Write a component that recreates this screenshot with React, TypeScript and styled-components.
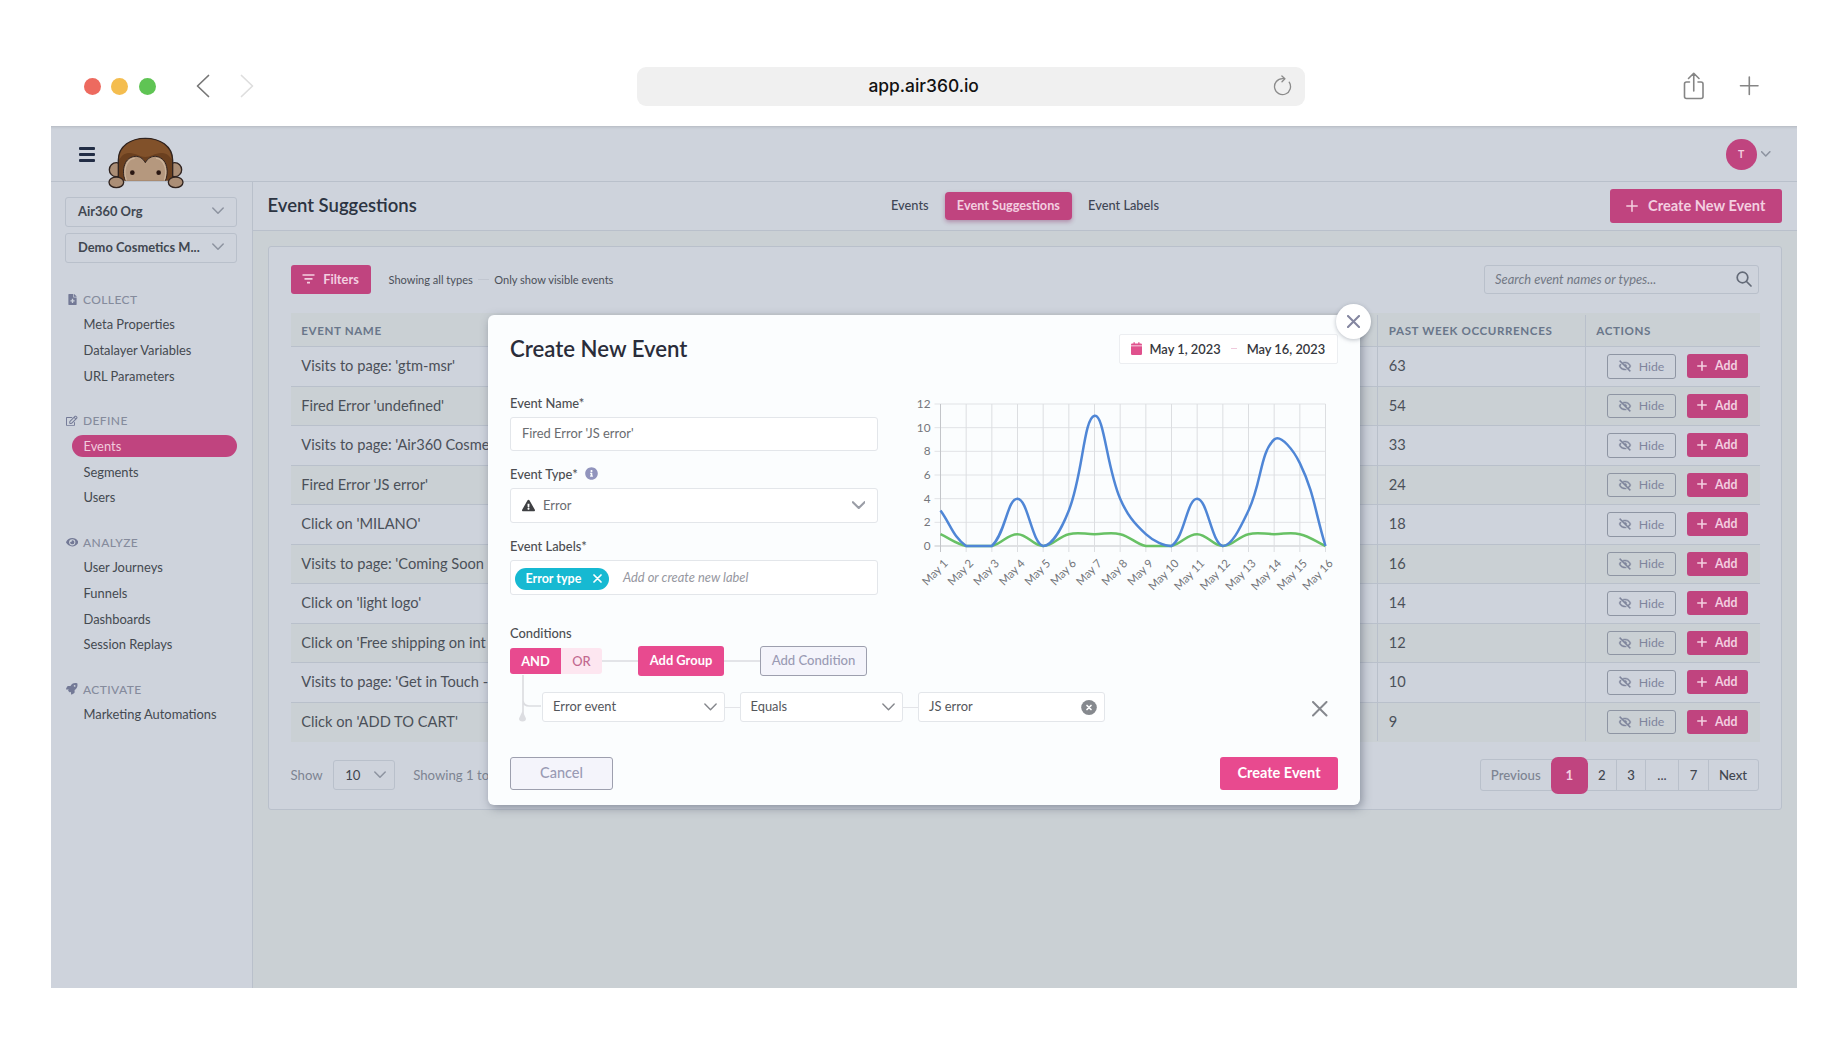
import React from 'react';
import styled, { createGlobalStyle, css } from 'styled-components';
import { FaEye, FaRocket, FaRegEdit, FaFileMedical, FaExclamationTriangle, FaInfoCircle } from 'react-icons/fa';
import { BiHide } from 'react-icons/bi';

const c = {
  panel: '#ced3dc',
  canvas: '#cad0d4',
  line: '#b9c0cb',
  pink: '#c0447f',
  pinkText: '#f3cfe0',
  text: '#4b5059',
  heading: '#2c3442',
  muted: '#858b9c',
  bright: '#e84a8f',
  modal: '#fbfdfe',
  fieldLine: '#e3e6ea',
  lavender: '#9a9bb4',
};

const GlobalStyle = createGlobalStyle`
  * { box-sizing: border-box; }
  body { margin: 0; background: #fff; font-family: Lato, "Open Sans", sans-serif; color: ${c.text}; }
  svg { display: block; flex: none; }
  button { font: inherit; margin: 0; cursor: pointer; }
`;

const Page = styled.div`
  position: relative;
  width: 1847px;
  height: 1039px;
  padding: 0 50px 0 51px;
  overflow: hidden;
  background: #fff;
`;

/* Browser chrome */
const Chrome = styled.div`
  display: flex;
  align-items: flex-start;
  height: 126px;
  padding: 46px 38px 0 32.5px;
`;
const ChromeItem = styled.div<{ $left?: number }>`
  display: flex;
  align-items: center;
  height: 80px;
  margin-left: ${(p) => p.$left ?? 0}px;
`;
const Light = styled.span<{ $color: string }>`
  width: 17px;
  height: 17px;
  margin-right: 10.8px;
  border-radius: 50%;
  background: ${(p) => p.$color};
`;
const AddressBar = styled.div`
  display: flex;
  align-items: center;
  justify-content: space-between;
  width: 668px;
  height: 39px;
  padding: 0 13px 1px 231.5px;
  border-radius: 9px;
  background: #f0f0f0;
  color: #111;
  font: 500 17.4px Inter, "Open Sans", sans-serif;
`;

/* Application shell */
const Workspace = styled.div`
  height: 862px;
  background: ${c.panel};
  box-shadow: inset 0 4px 3px -3px rgba(140, 145, 150, 0.4);
`;
const Header = styled.header`
  display: flex;
  align-items: flex-start;
  height: 56px;
  padding: 0 26.5px 0 27.5px;
  border-bottom: 1px solid ${c.line};
`;
const Burger = styled.div`
  display: grid;
  gap: 3.4px;
  width: 16.5px;
  margin: 21.3px 13px 0 0;
  span { height: 2.5px; border-radius: 1px; background: #222d45; }
`;
const Logo = styled.svg`
  margin-top: 11px;
  z-index: 1;
`;
const Account = styled.div`
  display: flex;
  align-items: center;
  gap: 4.5px;
  margin: 13px 0 0 auto;
`;
const Avatar = styled.div`
  display: grid;
  place-items: center;
  width: 30.5px;
  height: 30.5px;
  border-radius: 50%;
  background: ${c.pink};
  color: ${c.pinkText};
  font-size: 10.5px;
  font-weight: 700;
`;
const Shell = styled.div`
  display: grid;
  grid-template-columns: 201.5px 1fr;
  height: 806px;
`;
const Sidebar = styled.nav`
  padding: 15px 15px 0 14px;
  border-right: 1px solid ${c.line};
`;
const Picker = styled.div`
  display: flex;
  align-items: center;
  justify-content: space-between;
  height: 29.5px;
  margin-bottom: 6.8px;
  padding: 0 12px 2px 12px;
  border: 1px solid ${c.line};
  border-radius: 3px;
  color: #414751;
  font-size: 12.9px;
  font-weight: 700;
`;
const Group = styled.section`
  margin-top: 20.4px;
  &:first-of-type { margin-top: 23.6px; }
`;
const GroupLabel = styled.div`
  display: flex;
  align-items: center;
  height: 27.6px;
  padding-bottom: 1.9px;
  color: ${c.muted};
  font-size: 12px;
  font-weight: 500;
  letter-spacing: 0.4px;
`;
const GroupIcon = styled.span`
  display: flex;
  justify-content: center;
  width: 14px;
  margin-right: 4px;
  color: #737996;
`;
const NavLink = styled.a<{ $active?: boolean }>`
  display: flex;
  align-items: center;
  height: 22px;
  margin: 0 0 3.72px 6.5px;
  padding: 0 0 1px 12px;
  border-radius: 11px;
  font-size: 12.9px;
  color: #444950;
  ${(p) => p.$active && css`background: ${c.pink}; color: #f2cbdd;`}
`;

const Main = styled.main`
  background: ${c.canvas};
`;
const TitleBar = styled.div`
  display: flex;
  align-items: center;
  height: 49px;
  padding: 0 15px 0 15px;
  border-bottom: 1px solid ${c.line};
  background: ${c.panel};
`;
const Title = styled.h1`
  flex: 0 0 623.5px;
  margin: 0 0 3px;
  color: ${c.heading};
  font-size: 18.5px;
  font-weight: 600;
`;
const Tab = styled.a<{ $active?: boolean }>`
  display: flex;
  align-items: center;
  justify-content: center;
  height: 28px;
  margin-right: 16px;
  padding-bottom: 2px;
  color: #3f4655;
  font-size: 12.8px;
  font-weight: 500;
  ${(p) => p.$active && css`
    width: 127.5px;
    border-radius: 4px;
    background: ${c.pink};
    color: ${c.pinkText};
    font-size: 12.7px;
    font-weight: 700;
    box-shadow: 0 2px 4px rgba(140, 60, 110, 0.45);
  `}
`;
const Solid = styled.button<{ $w: number; $h: number; $size: number; $gap?: number; $bright?: boolean }>`
  display: flex;
  align-items: center;
  justify-content: center;
  gap: ${(p) => p.$gap ?? 0}px;
  width: ${(p) => p.$w}px;
  height: ${(p) => p.$h}px;
  padding: 0 0 1px;
  border: 0;
  border-radius: 3px;
  background: ${(p) => (p.$bright ? c.bright : c.pink)};
  color: ${(p) => (p.$bright ? '#fff' : c.pinkText)};
  font-size: ${(p) => p.$size}px;
  font-weight: 700;
  white-space: nowrap;
`;
const PushRight = styled.div`
  margin-left: auto;
`;
const Card = styled.section`
  width: 1514px;
  height: 564px;
  margin: 15px 0 0 15px;
  padding: 18px 22px 0 22px;
  border: 1px solid ${c.line};
  border-radius: 3px;
  background: ${c.panel};
`;
const Toolbar = styled.div`
  display: flex;
  align-items: center;
  height: 29px;
  font-size: 11.3px;
`;
const Separator = styled.span`
  width: 11px;
  height: 1px;
  margin: 0 5px 0 5.5px;
  background: #c1c6d0;
`;
const Note = styled.span<{ $left?: number }>`
  margin-left: ${(p) => p.$left ?? 0}px;
  font-size: 11.05px;
`;
const Search = styled.div`
  display: flex;
  align-items: center;
  justify-content: space-between;
  width: 275px;
  height: 29.5px;
  margin-left: auto;
  padding: 0 6px 1px 10.5px;
  border: 1px solid ${c.line};
  border-radius: 3px;
  color: #727884;
  font-size: 12.9px;
  font-style: italic;
`;
const Table = styled.div`
  width: 1469px;
  margin-top: 19px;
`;
const Row = styled.div<{ $shade?: boolean; $head?: boolean }>`
  display: grid;
  grid-template-columns: 1086.5px 207.5px 1fr;
  height: ${(p) => (p.$head ? 34 : 39.5)}px;
  border-bottom: 1px solid ${c.line};
  background: ${(p) => (p.$shade ? c.canvas : 'transparent')};
  font-size: 14.65px;
  ${(p) => p.$head && css`
    padding-top: 2px;
    color: #69768a;
    font-size: 11.6px;
    font-weight: 700;
    letter-spacing: 0.6px;
  `}
  &:last-child { border-bottom-color: transparent; }
`;
const Cell = styled.div<{ $actions?: boolean }>`
  display: flex;
  align-items: center;
  gap: 11px;
  padding: 0 0 ${(p) => (p.$actions ? 0 : 1)}px ${(p) => (p.$actions ? 21 : 10.8)}px;
  white-space: nowrap;
  & + & { border-left: 1px solid ${c.line}; }
`;
const Hide = styled.button`
  display: flex;
  align-items: center;
  justify-content: center;
  gap: 7px;
  width: 69px;
  height: 24.5px;
  padding: 0;
  border: 1px solid #8e95a3;
  border-radius: 3px;
  background: transparent;
  color: #7f859c;
  font-size: 12.3px;
  svg { stroke: currentColor; stroke-width: 0.7px; }
`;
const Footer = styled.div`
  display: flex;
  align-items: center;
  height: 37px;
  margin-top: 14.5px;
  color: #7d8492;
  font-size: 13.2px;
`;
const PageSize = styled.div`
  display: flex;
  align-items: center;
  justify-content: space-between;
  width: 61.5px;
  height: 29.5px;
  margin: 0 18.5px 0 10.5px;
  padding: 0 8px 1px 11px;
  border: 1px solid ${c.line};
  border-radius: 3px;
  color: #41464f;
`;
const Pager = styled.div`
  display: flex;
  align-items: center;
  width: 279px;
  height: 31.5px;
  margin-left: auto;
  border: 1px solid ${c.line};
  border-radius: 3px;
`;
const PageLink = styled.span<{ $w: number; $muted?: boolean; $active?: boolean; $rule?: boolean }>`
  display: flex;
  align-items: center;
  justify-content: center;
  flex: 0 0 ${(p) => p.$w}px;
  height: 29.5px;
  padding-bottom: 1px;
  border-right: ${(p) => (p.$rule ? `1px solid ${c.line}` : '0')};
  color: ${(p) => (p.$muted ? '#7d8492' : '#41464f')};
  font-weight: 500;
  ${(p) => p.$active && css`
    height: 37px;
    border-radius: 7px;
    background: ${c.pink};
    color: ${c.pinkText};
    font-weight: 700;
  `}
`;

/* Dialog */
const Dialog = styled.div`
  position: absolute;
  top: 315px;
  left: 488px;
  z-index: 2;
  width: 872px;
  height: 490px;
  padding: 19px 22px 0;
  border-radius: 6px;
  background: ${c.modal};
  box-shadow: 2px 3px 10px rgba(70, 78, 95, 0.5);
  color: #4c4e52;
  font-size: 12.9px;
`;
const CloseButton = styled.button`
  position: absolute;
  top: -11px;
  right: -11px;
  display: grid;
  place-items: center;
  width: 35px;
  height: 35px;
  padding: 0;
  border: 0;
  border-radius: 50%;
  background: #fff;
  box-shadow: 0 1px 4px rgba(70, 78, 95, 0.35);
`;
const DialogHead = styled.div`
  display: flex;
  align-items: center;
  justify-content: space-between;
  height: 30px;
  margin-bottom: 29.5px;
`;
const DialogTitle = styled.h2`
  margin: 0 0 2px;
  color: #2a2d3a;
  font-size: 22.2px;
  font-weight: 600;
`;
const DateRange = styled.div`
  display: flex;
  align-items: center;
  width: 219px;
  height: 30px;
  padding: 0 0 1px 10.5px;
  border: 1px solid #eceef1;
  border-radius: 2px;
  background: #fff;
  color: #36373d;
  font-size: 12.85px;
  font-weight: 600;
  white-space: nowrap;
  svg { margin-right: 8px; }
`;
const DateDash = styled.span`
  width: 6px;
  height: 1px;
  margin: 0 9.5px 0 10.5px;
  background: #efc9dc;
`;
const DialogBody = styled.div`
  display: flex;
  gap: 32px;
`;
const Fields = styled.div`
  display: grid;
  gap: 14.1px;
  width: 368px;
`;
const Label = styled.div`
  display: flex;
  align-items: center;
  gap: 7px;
  height: 18px;
  margin-bottom: 5px;
  font-weight: 500;
  svg { margin-bottom: 2px; }
`;
const Input = styled.div`
  display: flex;
  align-items: center;
  gap: 8px;
  height: 34.7px;
  padding: 0 12px 1px 11px;
  border: 1px solid ${c.fieldLine};
  border-radius: 3px;
  background: #fff;
  color: #6a6c70;
  i { margin-left: 6px; color: #96979f; }
`;
const Chip = styled.span`
  display: flex;
  align-items: center;
  justify-content: space-between;
  width: 94px;
  height: 22px;
  margin: 4px 0 0 -7px;
  padding: 0 7px 1px 10.5px;
  border-radius: 11px;
  background: #16b9d2;
  color: #fff;
  font-size: 12.5px;
  font-weight: 700;
`;
const ConditionLabel = styled(Label)`
  margin: 29px 0 4.5px;
`;
const Strip = styled.div`
  display: flex;
  align-items: center;
  height: 29px;
`;
const Toggle = styled.span<{ $w: number; $on?: boolean }>`
  display: grid;
  place-items: center;
  width: ${(p) => p.$w}px;
  height: 26px;
  border-radius: ${(p) => (p.$on ? '3px 0 0 3px' : '0 3px 3px 0')};
  background: ${(p) => (p.$on ? c.bright : '#fde6f0')};
  color: ${(p) => (p.$on ? '#fff' : '#c2698f')};
  font-size: 12.9px;
  font-weight: ${(p) => (p.$on ? 700 : 500)};
`;
const Connector = styled.span<{ $w: number; $thin?: boolean }>`
  width: ${(p) => p.$w}px;
  height: ${(p) => (p.$thin ? 1 : 2)}px;
  background: #e3e4e8;
`;
const Outline = styled.button<{ $w: number; $h: number; $size: number }>`
  width: ${(p) => p.$w}px;
  height: ${(p) => p.$h}px;
  padding: 0 0 2px;
  border: 1px solid #9d9fae;
  border-radius: 3px;
  background: #f4f4fb;
  color: ${c.lavender};
  font-size: ${(p) => p.$size}px;
  font-weight: 500;
`;
const Condition = styled.div`
  display: flex;
  align-items: flex-end;
  height: 46.5px;
`;
const ConditionRow = styled.div`
  display: flex;
  align-items: center;
  flex: 1;
  height: 29.5px;
`;
const Select = styled.div<{ $w: number }>`
  display: flex;
  align-items: center;
  justify-content: space-between;
  width: ${(p) => p.$w}px;
  height: 29.5px;
  padding: 0 7px 2px 10px;
  border: 1px solid ${c.fieldLine};
  border-radius: 3px;
  background: #fff;
  color: #54565b;
  svg { margin-top: 3px; }
`;
const RemoveButton = styled.span`
  margin: 4px 10.5px 0 auto;
`;
const DialogFooter = styled.div`
  display: flex;
  justify-content: space-between;
  margin-top: 35px;
`;

const Chevron = ({ w = 12, color = '#8d93a0', sw = 1.5 }) => (
  <svg width={w} height={w * 0.62} viewBox="0 0 12 7.4" fill="none" stroke={color} strokeWidth={sw} strokeLinecap="round" strokeLinejoin="round">
    <path d="M.8 1 6 6.3 11.2 1" />
  </svg>
);
const Cross = ({ s, color, sw }: { s: number; color: string; sw: number }) => (
  <svg width={s} height={s} viewBox={`0 0 ${s} ${s}`} stroke={color} strokeWidth={sw} strokeLinecap="round">
    <path d={`M1 1 ${s - 1} ${s - 1}M${s - 1} 1 1 ${s - 1}`} />
  </svg>
);
const Plus = ({ s, sw = 1.5, color = 'currentColor' }: { s: number; sw?: number; color?: string }) => (
  <svg width={s} height={s} viewBox={`0 0 ${s} ${s}`} stroke={color} strokeWidth={sw} strokeLinecap="round">
    <path d={`M${s / 2} .8V${s - 0.8}M.8 ${s / 2}H${s - 0.8}`} />
  </svg>
);

const Monkey = () => (
  <Logo width="76" height="52" viewBox="0 0 228 156" stroke="#30231f" strokeWidth="4">
    <circle cx="25" cy="98" r="21" fill="#ab8e76" />
    <circle cx="200" cy="98" r="21" fill="#ab8e76" />
    <path d="M31 131V70C31 26 70 4 112 4s82 22 82 66v61" fill="#6b401f" />
    <path d="M34 68C34 28 72 6 112 6s79 22 79 62c-6-12-16-20-32-20-17 0-33 12-47 12S82 48 65 48c-15 0-25 8-31 20z" fill="#81512a" stroke="none" />
    <path d="M52 131c-8-18-7-40 1-55 12-21 44-27 59 1 15-28 47-22 59-1 8 15 9 37 1 55" fill="#b5987e" strokeWidth="3" />
    <path d="M55 130c-6-18-5-38 3-52 5-9 13-14 22-14M169 130c6-18 5-38-3-52-5-9-13-14-22-14" stroke="#cdb59c" fill="none" strokeWidth="3.500" />
    <circle cx="73" cy="107" r="7" fill="#2a1712" stroke="none" />
    <circle cx="152" cy="107" r="7" fill="#2a1712" stroke="none" />
    <ellipse cx="25" cy="136" rx="22" ry="16" fill="#ab8e76" />
    <ellipse cx="203" cy="136" rx="22" ry="16" fill="#ab8e76" />
  </Logo>
);

const blue = [3, 0, 0, 4, 0, 3, 11, 4, 1, 0, 4, 0, 3, 9, 7, 0];
const green = [1, 0, 0, 1, 0, 1, 1, 1, 0, 0, 1, 0, 1, 1, 1, 0];
const plot = { left: 30.5, top: 10, width: 385, height: 142 };
const px = (i: number) => plot.left + (i * plot.width) / 15;
const py = (v: number) => plot.top + plot.height * (1 - v / 12);

/* Cubic spline with tension 0.4, control points kept inside the plot area. */
function spline(values: number[]) {
  const pts = values.map((v, i) => ({ x: px(i), y: py(v) }));
  const clamp = (y: number) => Math.min(plot.top + plot.height, Math.max(plot.top, y));
  const ctl = pts.map((p, i) => {
    const a = pts[Math.max(0, i - 1)];
    const b = pts[Math.min(pts.length - 1, i + 1)];
    const d1 = Math.hypot(p.x - a.x, p.y - a.y);
    const d2 = Math.hypot(b.x - p.x, b.y - p.y);
    const f1 = (0.4 * d1) / (d1 + d2);
    const f2 = (0.4 * d2) / (d1 + d2);
    return {
      px: p.x - f1 * (b.x - a.x),
      py: clamp(p.y - f1 * (b.y - a.y)),
      nx: p.x + f2 * (b.x - a.x),
      ny: clamp(p.y + f2 * (b.y - a.y)),
    };
  });
  return pts.reduce(
    (d, p, i) => (i === 0 ? `M${p.x} ${p.y}` : `${d}C${ctl[i - 1].nx} ${ctl[i - 1].ny} ${ctl[i].px} ${ctl[i].py} ${p.x} ${p.y}`),
    '',
  );
}

const ChartText = styled.text<{ $size?: number }>`
  fill: #74767b;
  font-family: Lato, sans-serif;
  font-size: ${(p) => p.$size ?? 11.8}px;
`;

const Chart = () => (
  <svg width="428" height="200" viewBox="0 0 428 200" fill="none">
    {[0, 2, 4, 6, 8, 10, 12].map((v) => (
      <React.Fragment key={v}>
        <path d={`M${plot.left - 6} ${py(v)}H${plot.left + plot.width}`} stroke={v ? '#e1e3e6' : '#c3c5c9'} />
        <ChartText x="20.5" y={py(v) + 4} textAnchor="end">{v}</ChartText>
      </React.Fragment>
    ))}
    {blue.map((_, i) => (
      <React.Fragment key={i}>
        <path d={`M${px(i)} ${plot.top}V${plot.top + plot.height + 6}`} stroke={i ? '#dcdee1' : '#c3c5c9'} />
        <ChartText $size={11.4} transform={`translate(${px(i) + 8} ${plot.top + plot.height + 18}) rotate(-46)`} textAnchor="end">
          {`May ${i + 1}`}
        </ChartText>
      </React.Fragment>
    ))}
    <path d={spline(green)} stroke="#68c165" strokeWidth="2.500" />
    <path d={spline(blue)} stroke="#4f86d6" strokeWidth="2.500" />
  </svg>
);

const groups = [
  { name: 'COLLECT', icon: <FaFileMedical size={11} />, links: ['Meta Properties', 'Datalayer Variables', 'URL Parameters'] },
  { name: 'DEFINE', icon: <FaRegEdit size={11.5} />, links: ['Events', 'Segments', 'Users'] },
  { name: 'ANALYZE', icon: <FaEye size={12.5} />, links: ['User Journeys', 'Funnels', 'Dashboards', 'Session Replays'] },
  { name: 'ACTIVATE', icon: <FaRocket size={11.5} />, links: ['Marketing Automations'] },
];

const rows: [string, number][] = [
  ["Visits to page: 'gtm-msr'", 63],
  ["Fired Error 'undefined'", 54],
  ["Visits to page: 'Air360 Cosme", 33],
  ["Fired Error 'JS error'", 24],
  ["Click on 'MILANO'", 18],
  ["Visits to page: 'Coming Soon", 16],
  ["Click on 'light logo'", 14],
  ["Click on 'Free shipping on int", 12],
  ["Visits to page: 'Get in Touch -", 10],
  ["Click on 'ADD TO CART'", 9],
];

const BrowserChrome = () => (
  <Chrome>
    <ChromeItem>
      <Light $color="#ed6a5f" />
      <Light $color="#f4bd4f" />
      <Light $color="#5fc454" />
    </ChromeItem>
    <ChromeItem $left={29.5}>
      <svg width="60" height="24" viewBox="0 0 60 24" fill="none" strokeWidth="1.700" strokeLinecap="round" strokeLinejoin="round">
        <path d="M12.500 1.500 1.500 12l11 10.500" stroke="#777" />
        <path d="M45.500 1.500 56.500 12 45.500 22.500" stroke="#dedede" />
      </svg>
    </ChromeItem>
    <ChromeItem $left={380.5}>
      <AddressBar>
        app.air360.io
        <svg width="19" height="21" viewBox="0 0 19 21" fill="none" stroke="#8b8b8b" strokeWidth="1.300" strokeLinecap="round" strokeLinejoin="round">
          <path d="M16.200 7.200A8 8 0 1 1 9.500 3.600h2" />
          <path d="M8.900.9 11.900 3.700 9 6.800" />
        </svg>
      </AddressBar>
    </ChromeItem>
    <PushRight>
      <ChromeItem>
        <svg width="76" height="28" viewBox="0 0 76 28" fill="none" stroke="#858585" strokeWidth="1.600" strokeLinecap="round" strokeLinejoin="round">
          <path d="M6.500 10h-3a2 2 0 0 0-2 2v12.500a2 2 0 0 0 2 2H18a2 2 0 0 0 2-2V12a2 2 0 0 0-2-2h-3M10.750 19V1.500M5.500 6.500l5.250-5.200L16 6.500" />
          <path d="M66.300 5v17.500M57.500 13.750h17.500" />
        </svg>
      </ChromeItem>
    </PushRight>
  </Chrome>
);

const NewEventDialog = () => (
  <Dialog role="dialog">
    <CloseButton aria-label="Close"><Cross s={13} color="#8486a0" sw={2.1} /></CloseButton>
    <DialogHead>
      <DialogTitle>Create New Event</DialogTitle>
      <DateRange>
        <svg width="11" height="13" viewBox="0 0 11 13" fill="#e0518d">
          <path d="M1.200 1.500h1.300V.3h1.300v1.200h3.400V.3h1.300v1.200h1.300q1.200 0 1.200 1.200v.8H0v-.8q0-1.200 1.200-1.200zM0 4.200h11v7.500q0 1.300-1.200 1.300H1.200Q0 13 0 11.700z" />
        </svg>
        <span>May 1, 2023</span>
        <DateDash />
        <span>May 16, 2023</span>
      </DateRange>
    </DialogHead>
    <DialogBody>
      <Fields>
        <div>
          <Label>Event Name*</Label>
          <Input>Fired Error 'JS error'</Input>
        </div>
        <div>
          <Label>Event Type* <FaInfoCircle size={13} color="#9194bd" /></Label>
          <Input>
            <FaExclamationTriangle size={13} color="#3f4043" />
            Error
            <PushRight><Chevron w={13.5} color="#9a9da6" sw={1.9} /></PushRight>
          </Input>
        </div>
        <div>
          <Label>Event Labels*</Label>
          <Input>
            <Chip>Error type <Cross s={9} color="#fff" sw={1.7} /></Chip>
            <i>Add or create new label</i>
          </Input>
        </div>
      </Fields>
      <Chart />
    </DialogBody>
    <ConditionLabel>Conditions</ConditionLabel>
    <Strip>
      <Toggle $w={51} $on>AND</Toggle>
      <Toggle $w={41}>OR</Toggle>
      <Connector $w={36} />
      <Solid $w={86} $h={29.5} $size={12.9} $bright>Add Group</Solid>
      <Connector $w={36} />
      <Outline $w={107} $h={29.5} $size={13.1}>Add Condition</Outline>
    </Strip>
    <Condition>
      <svg width="32" height="46.500" viewBox="0 0 32 46.500">
        <path d="M13 0V40M13 26q1 5 6 5H31" stroke="#dcdde1" strokeWidth="1.700" fill="none" />
        <path d="M12.500 36 16 43.500a3.500 3 0 0 1-7 0z" fill="#dcdde1" />
      </svg>
      <ConditionRow>
        <Select $w={182.5}>Error event <Chevron w={13} color="#85878c" sw={1.3} /></Select>
        <Connector $w={15} $thin />
        <Select $w={163}>Equals <Chevron w={13} color="#85878c" sw={1.3} /></Select>
        <Connector $w={15.5} $thin />
        <Select $w={186.5}>
          JS error
          <svg width="16" height="15" viewBox="0 0 16 15">
            <ellipse cx="8" cy="7.500" rx="7.800" ry="7.400" fill="#86898e" />
            <path d="M6 5.500 10 9.500M10 5.500 6 9.500" stroke="#fff" strokeWidth="1.700" strokeLinecap="round" />
          </svg>
        </Select>
        <RemoveButton><Cross s={15.5} color="#85888e" sw={2} /></RemoveButton>
      </ConditionRow>
    </Condition>
    <DialogFooter>
      <Outline $w={103} $h={33} $size={14.5}>Cancel</Outline>
      <Solid $w={118} $h={33} $size={14.5} $bright>Create Event</Solid>
    </DialogFooter>
  </Dialog>
);

export default function App() {
  return (
    <Page>
      <GlobalStyle />
      <BrowserChrome />
      <Workspace>
        <Header>
          <Burger><span /><span /><span /></Burger>
          <Monkey />
          <Account>
            <Avatar>T</Avatar>
            <Chevron w={9.5} sw={2} />
          </Account>
        </Header>
        <Shell>
          <Sidebar>
            <Picker>Air360 Org <Chevron /></Picker>
            <Picker>Demo Cosmetics M... <Chevron /></Picker>
            {groups.map((g) => (
              <Group key={g.name}>
                <GroupLabel><GroupIcon>{g.icon}</GroupIcon>{g.name}</GroupLabel>
                {g.links.map((l) => <NavLink key={l} $active={l === 'Events'}>{l}</NavLink>)}
              </Group>
            ))}
          </Sidebar>
          <Main>
            <TitleBar>
              <Title>Event Suggestions</Title>
              <Tab>Events</Tab>
              <Tab $active>Event Suggestions</Tab>
              <Tab>Event Labels</Tab>
              <PushRight>
                <Solid $w={172.5} $h={33.5} $size={14.6} $gap={10}><Plus s={12} />Create New Event</Solid>
              </PushRight>
            </TitleBar>
            <Card>
              <Toolbar>
                <Solid $w={80} $h={29} $size={12.8} $gap={8}>
                  <svg width="13" height="10" viewBox="0 0 13 10" stroke="currentColor" strokeWidth="1.700">
                    <path d="M.5 1h12M2.500 4.800h8M5 8.600h3" />
                  </svg>
                  Filters
                </Solid>
                <Note $left={18}>Showing all types</Note>
                <Separator />
                <Note>Only show visible events</Note>
                <Search>
                  Search event names or types...
                  <svg width="16" height="16" viewBox="0 0 16 16" fill="none" stroke="#646b78" strokeWidth="1.700" strokeLinecap="round">
                    <circle cx="6.500" cy="6.500" r="5.300" />
                    <path d="m10.500 10.500 4.500 4.500" />
                  </svg>
                </Search>
              </Toolbar>
              <Table>
                <Row $head $shade>
                  <Cell>EVENT NAME</Cell>
                  <Cell>PAST WEEK OCCURRENCES</Cell>
                  <Cell>ACTIONS</Cell>
                </Row>
                {rows.map(([name, count], i) => (
                  <Row key={name} $shade={i % 2 === 1}>
                    <Cell>{name}</Cell>
                    <Cell>{count}</Cell>
                    <Cell $actions>
                      <Hide><BiHide size={14} />Hide</Hide>
                      <Solid $w={61.5} $h={24} $size={12.3} $gap={8}><Plus s={10} sw={1.6} />Add</Solid>
                    </Cell>
                  </Row>
                ))}
              </Table>
              <Footer>
                Show
                <PageSize>10 <Chevron /></PageSize>
                Showing 1 to
                <Pager>
                  <PageLink $w={70.5} $muted>Previous</PageLink>
                  <PageLink $w={36.5} $active>1</PageLink>
                  <PageLink $w={29.5} $rule>2</PageLink>
                  <PageLink $w={29} $rule>3</PageLink>
                  <PageLink $w={33} $rule>...</PageLink>
                  <PageLink $w={30} $rule>7</PageLink>
                  <PageLink $w={48}>Next</PageLink>
                </Pager>
              </Footer>
            </Card>
          </Main>
        </Shell>
      </Workspace>
      <NewEventDialog />
    </Page>
  );
}
